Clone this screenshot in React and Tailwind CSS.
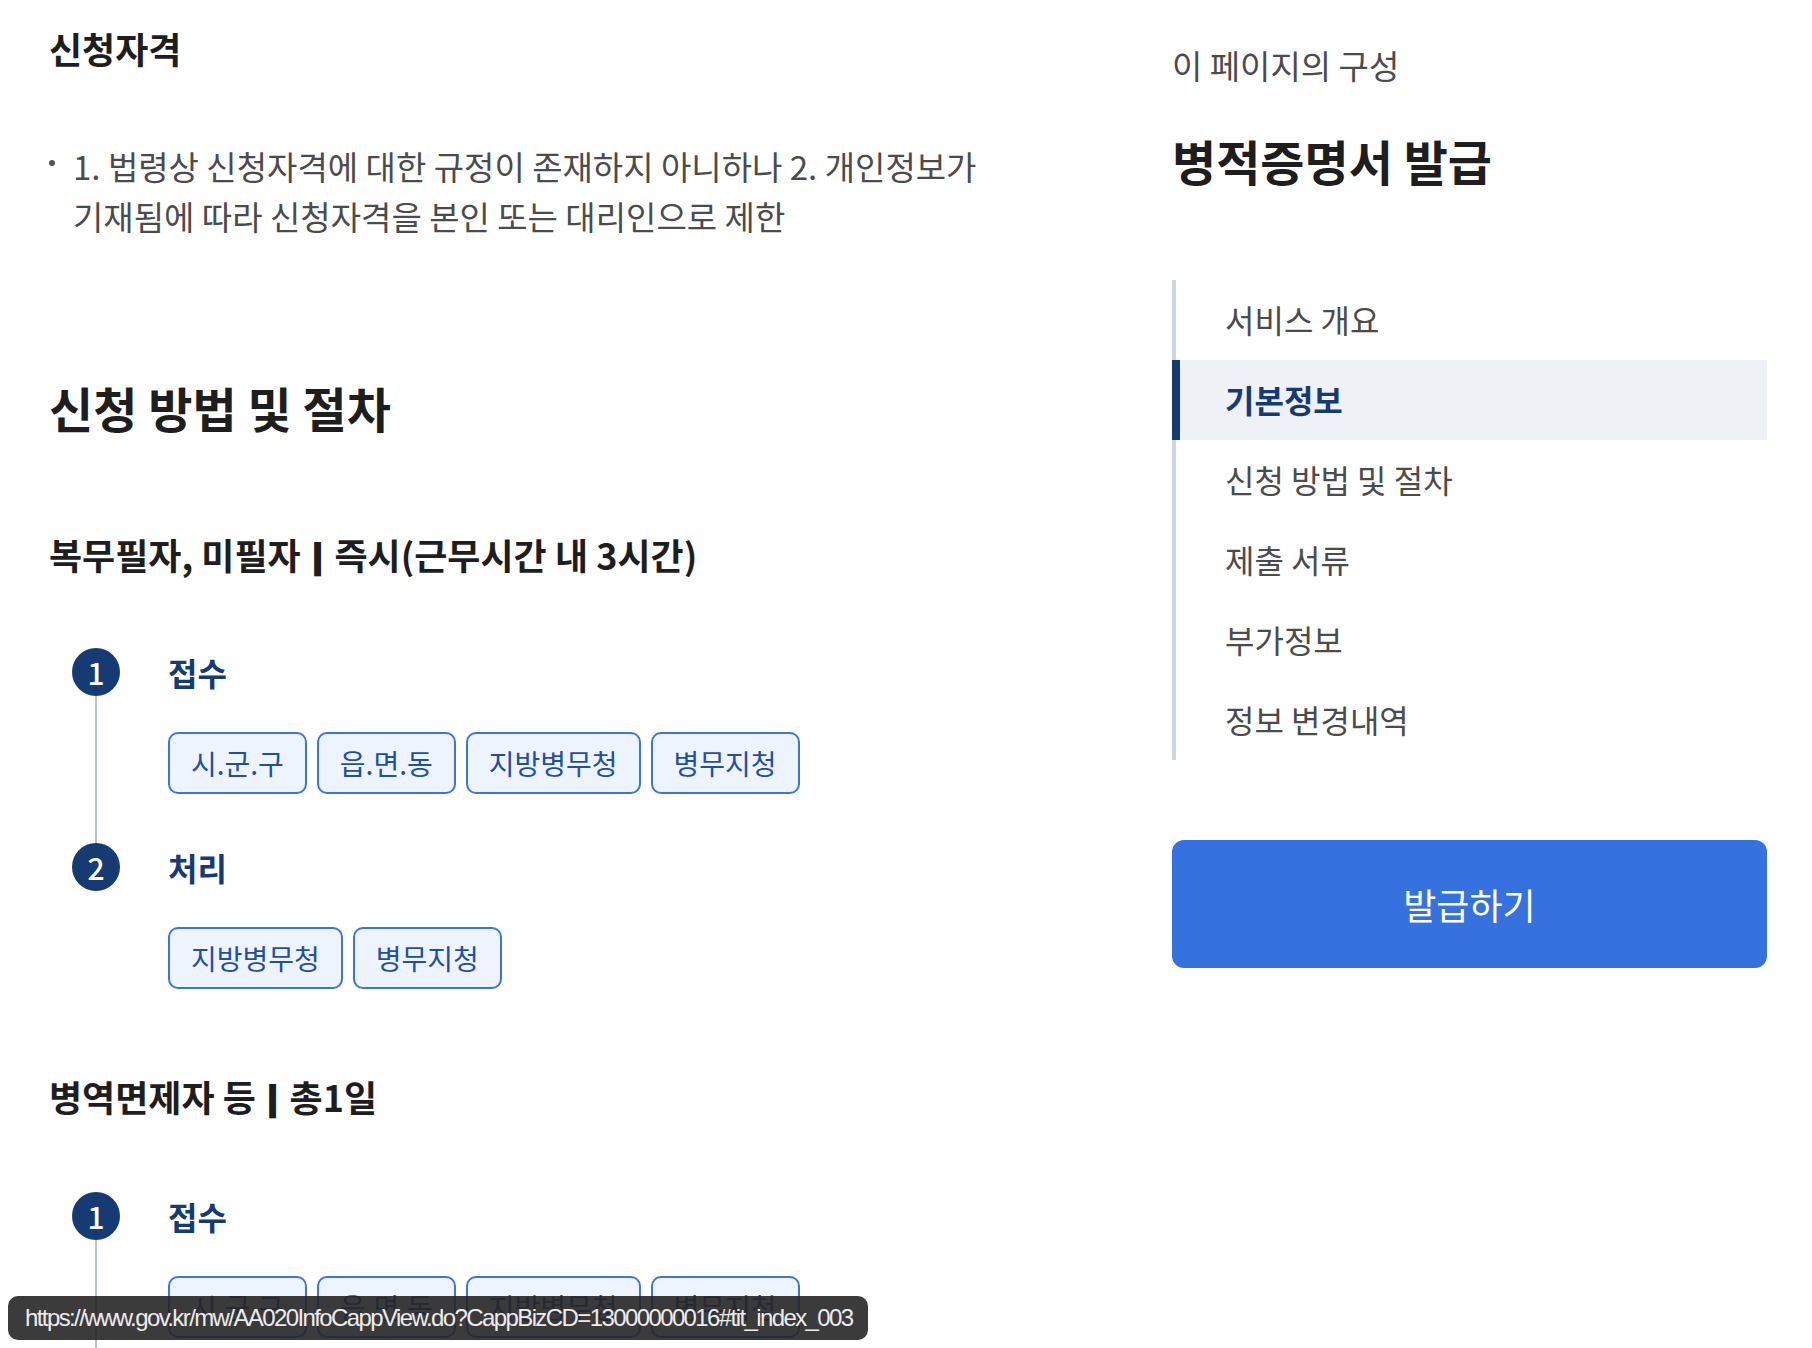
import React from "react";

const FONT = "font-['Noto_Sans_CJK_KR','Noto_Sans',sans-serif]";

function Tag({ children }) {
  return (
    <div className="h-[62px] px-[21px] border-2 border-[#3b74e0] bg-[#eef4fe] rounded-[10px] text-[28px] leading-none text-[#1f4ea6] flex items-center">
      {children}
    </div>
  );
}

function Step({ num, label, tags, line, last }) {
  return (
    <div className="flex ml-[23px]">
      <div className="flex flex-col items-center w-[48px] shrink-0">
        <div className="w-[48px] h-[48px] rounded-full bg-[#163a72] text-white text-[30px] font-medium leading-none flex items-center justify-center">
          {num}
        </div>
        {line ? <div className="w-[2px] flex-1 bg-[#b7c3d4]" /> : null}
      </div>
      <div className={"ml-[48px] " + (last ? "" : "pb-[49px]")}>
        <div className="h-[48px] flex items-center text-[32px] font-bold text-[#163a72] leading-none">
          {label}
        </div>
        <div className="mt-[36px] flex gap-[10px]">
          {tags.map((t) => (
            <Tag key={t}>{t}</Tag>
          ))}
        </div>
      </div>
    </div>
  );
}

function Bar() {
  return (
    <span className="inline-block font-black text-[30px] leading-none align-[2px] scale-x-200 mx-[4px]">|</span>
  );
}

export default function App() {
  const nav = ["서비스 개요", "기본정보", "신청 방법 및 절차", "제출 서류", "부가정보", "정보 변경내역"];
  return (
    <div className={"relative w-[1812px] h-[1348px] overflow-hidden bg-white " + FONT}>
      <div className="flex">
        {/* Left column */}
        <div className="w-[1172px] shrink-0 pl-[49px]">
          <h2 className="pt-[26px] text-[36px] leading-[44px] font-bold text-[#1e1e1e]">신청자격</h2>

          <div className="mt-[71px] flex">
            <div className="w-[24px] shrink-0">
              <div className="mt-[19px] w-[6px] h-[6px] rounded-full bg-[#555555]" />
            </div>
            <p className="w-[960px] break-keep text-[33px] leading-[50px] text-[#4b4b4b]">
              1. 법령상 신청자격에 대한 규정이 존재하지 아니하나 2. 개인정보가 기재됨에 따라 신청자격을 본인 또는 대리인으로 제한
            </p>
          </div>

          <h2 className="mt-[138px] text-[48px] leading-[56px] font-bold text-[#1e1e1e]">신청 방법 및 절차</h2>

          <h3 className="mt-[97px] text-[36px] leading-[44px] font-bold text-[#1e1e1e]">
            복무필자, 미필자 <Bar /> 즉시(근무시간 내 3시간)
          </h3>

          <div className="mt-[72px]">
            <Step num="1" label="접수" tags={["시.군.구", "읍.면.동", "지방병무청", "병무지청"]} line />
            <Step num="2" label="처리" tags={["지방병무청", "병무지청"]} last />
          </div>

          <h3 className="mt-[85px] text-[36px] leading-[44px] font-bold text-[#1e1e1e]">
            병역면제자 등 <Bar /> 총1일
          </h3>

          <div className="mt-[74px]">
            <Step num="1" label="접수" tags={["시.군.구", "읍.면.동", "지방병무청", "병무지청"]} line />
            <Step num="2" label="처리" tags={["지방병무청", "병무지청"]} last />
          </div>
        </div>

        {/* Right column */}
        <div className="w-[595px] shrink-0">
          <div className="pt-[45px] text-[33px] leading-[40px] text-[#4b4b4b]">이 페이지의 구성</div>
          <div className="mt-[47px] text-[48px] leading-[56px] font-bold text-[#1e1e1e]">병적증명서 발급</div>

          <nav className="mt-[92px] border-l-4 border-[#cfd6e0]">
            {nav.map((item) =>
              item === "기본정보" ? (
                <div
                  key={item}
                  className="-ml-[4px] h-[80px] border-l-[8px] border-[#163a72] bg-[#eef1f6] pl-[45px] pb-[3px] flex items-center text-[32px] font-bold text-[#163a72]"
                >
                  {item}
                </div>
              ) : (
                <div key={item} className="h-[80px] pl-[49px] pb-[3px] flex items-center text-[32px] text-[#4b4b4b]">
                  {item}
                </div>
              )
            )}
          </nav>

          <button className="mt-[80px] w-full h-[128px] rounded-[12px] bg-[#3671e0] text-white text-[36px] flex items-center justify-center">
            발급하기
          </button>
        </div>
      </div>

      {/* Status bubble overlay */}
      <div className="absolute left-[8px] top-[1296px] w-[860px] h-[44px] rounded-[10px] bg-[#262626]/90 flex items-center pl-[17px] font-['Liberation_Sans',Arial,sans-serif] text-[24px] tracking-[-1.6px] text-[#ececec] whitespace-nowrap">
        https://www.gov.kr/mw/AA020InfoCappView.do?CappBizCD=13000000016#tit_index_003
      </div>
    </div>
  );
}
